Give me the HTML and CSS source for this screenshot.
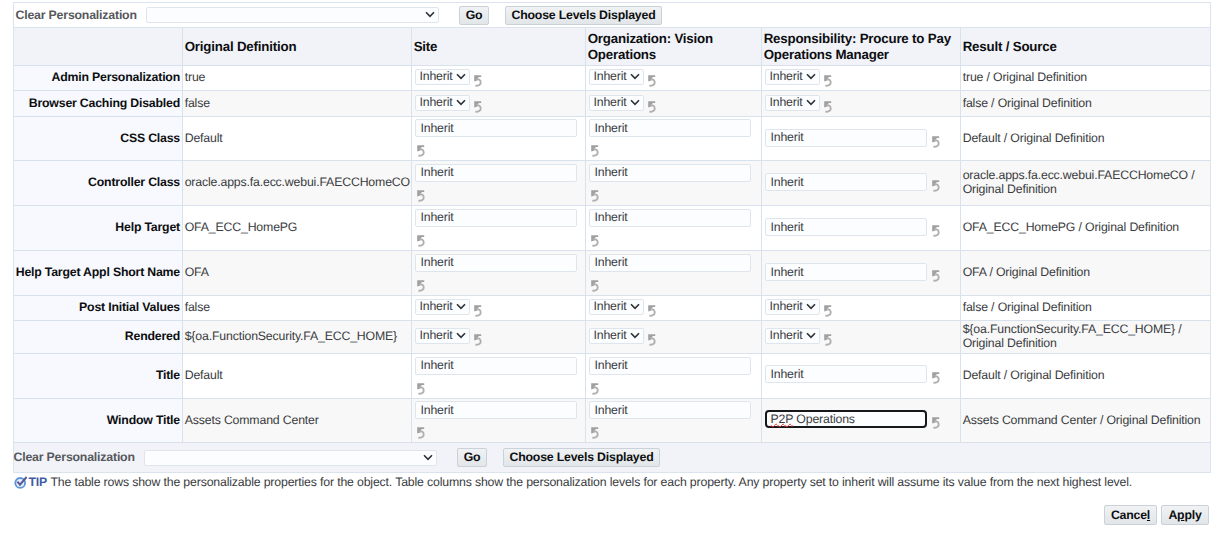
FILE: index.html
```html
<!DOCTYPE html>
<html lang="en">
<head>
<meta charset="utf-8">
<title>Personalize Page</title>
<link rel="stylesheet" href="styles.css">
</head>
<body>
<svg class="defs" width="0" height="0" aria-hidden="true">
  <symbol id="chev" viewBox="0 0 10 7"><path d="M1 1.2 5 5.4 9 1.2" fill="none" stroke="#2e3338" stroke-width="1.6"/></symbol>
  <symbol id="undo" viewBox="0 0 8 12"><path d="M0.2 0.2H7.2V1.9H5L3.4 3.5V5.6L0.2 6.4Z" fill="#a0a0a0"/><path d="M2.4 4.4C4.8 3.8 6.7 5.2 6.7 7.4 6.7 9.5 4.8 10.9 1.4 10.8" fill="none" stroke="#b0b0b0" stroke-width="1.9"/></symbol>
</svg>
<main class="page">
  <section class="panel">
    <div class="toolbar">
      <span class="toolbar-label">Clear Personalization</span>
      <span class="select wide"><svg class="chev"><use href="#chev"/></svg></span>
      <button class="btn go">Go</button>
      <button class="btn levels">Choose Levels Displayed</button>
    </div>
    <table class="props">
      <colgroup><col class="c-name"><col class="c-orig"><col class="c-site"><col class="c-org"><col class="c-resp"><col class="c-result"></colgroup>
      <thead>
        <tr class="head"><th></th><th>Original Definition</th><th>Site</th><th>Organization: Vision Operations</th><th>Responsibility: Procure to Pay Operations Manager</th><th>Result / Source</th></tr>
      </thead>
      <tbody>
        <tr class="r25"><th>Admin Personalization</th><td>true</td>
          <td class="pick"><div class="line"><span class="select">Inherit<svg class="chev"><use href="#chev"/></svg></span><svg class="undo"><use href="#undo"/></svg></div></td>
          <td class="pick"><div class="line"><span class="select">Inherit<svg class="chev"><use href="#chev"/></svg></span><svg class="undo"><use href="#undo"/></svg></div></td>
          <td class="pick"><div class="line"><span class="select">Inherit<svg class="chev"><use href="#chev"/></svg></span><svg class="undo"><use href="#undo"/></svg></div></td>
          <td>true / Original Definition</td></tr>
        <tr class="r26 alt"><th>Browser Caching Disabled</th><td>false</td>
          <td class="pick"><div class="line"><span class="select">Inherit<svg class="chev"><use href="#chev"/></svg></span><svg class="undo"><use href="#undo"/></svg></div></td>
          <td class="pick"><div class="line"><span class="select">Inherit<svg class="chev"><use href="#chev"/></svg></span><svg class="undo"><use href="#undo"/></svg></div></td>
          <td class="pick"><div class="line"><span class="select">Inherit<svg class="chev"><use href="#chev"/></svg></span><svg class="undo"><use href="#undo"/></svg></div></td>
          <td>false / Original Definition</td></tr>
        <tr class="r44"><th>CSS Class</th><td>Default</td>
          <td class="edit"><div class="stack"><input class="field" value="Inherit"><svg class="undo"><use href="#undo"/></svg></div></td>
          <td class="edit"><div class="stack"><input class="field" value="Inherit"><svg class="undo"><use href="#undo"/></svg></div></td>
          <td class="edit mid"><div class="line"><input class="field" value="Inherit"><svg class="undo"><use href="#undo"/></svg></div></td>
          <td>Default / Original Definition</td></tr>
        <tr class="r45 alt"><th>Controller Class</th><td>oracle.apps.fa.ecc.webui.FAECCHomeCO</td>
          <td class="edit"><div class="stack"><input class="field" value="Inherit"><svg class="undo"><use href="#undo"/></svg></div></td>
          <td class="edit"><div class="stack"><input class="field" value="Inherit"><svg class="undo"><use href="#undo"/></svg></div></td>
          <td class="edit mid"><div class="line"><input class="field" value="Inherit"><svg class="undo"><use href="#undo"/></svg></div></td>
          <td>oracle.apps.fa.ecc.webui.FAECCHomeCO / Original Definition</td></tr>
        <tr class="r45"><th>Help Target</th><td>OFA_ECC_HomePG</td>
          <td class="edit"><div class="stack"><input class="field" value="Inherit"><svg class="undo"><use href="#undo"/></svg></div></td>
          <td class="edit"><div class="stack"><input class="field" value="Inherit"><svg class="undo"><use href="#undo"/></svg></div></td>
          <td class="edit mid"><div class="line"><input class="field" value="Inherit"><svg class="undo"><use href="#undo"/></svg></div></td>
          <td>OFA_ECC_HomePG / Original Definition</td></tr>
        <tr class="r45 alt"><th>Help Target Appl Short Name</th><td>OFA</td>
          <td class="edit"><div class="stack"><input class="field" value="Inherit"><svg class="undo"><use href="#undo"/></svg></div></td>
          <td class="edit"><div class="stack"><input class="field" value="Inherit"><svg class="undo"><use href="#undo"/></svg></div></td>
          <td class="edit mid"><div class="line"><input class="field" value="Inherit"><svg class="undo"><use href="#undo"/></svg></div></td>
          <td>OFA / Original Definition</td></tr>
        <tr class="r25"><th>Post Initial Values</th><td>false</td>
          <td class="pick"><div class="line"><span class="select">Inherit<svg class="chev"><use href="#chev"/></svg></span><svg class="undo"><use href="#undo"/></svg></div></td>
          <td class="pick"><div class="line"><span class="select">Inherit<svg class="chev"><use href="#chev"/></svg></span><svg class="undo"><use href="#undo"/></svg></div></td>
          <td class="pick"><div class="line"><span class="select">Inherit<svg class="chev"><use href="#chev"/></svg></span><svg class="undo"><use href="#undo"/></svg></div></td>
          <td>false / Original Definition</td></tr>
        <tr class="r33 alt"><th>Rendered</th><td>${oa.FunctionSecurity.FA_ECC_HOME}</td>
          <td class="pick"><div class="line"><span class="select">Inherit<svg class="chev"><use href="#chev"/></svg></span><svg class="undo"><use href="#undo"/></svg></div></td>
          <td class="pick"><div class="line"><span class="select">Inherit<svg class="chev"><use href="#chev"/></svg></span><svg class="undo"><use href="#undo"/></svg></div></td>
          <td class="pick"><div class="line"><span class="select">Inherit<svg class="chev"><use href="#chev"/></svg></span><svg class="undo"><use href="#undo"/></svg></div></td>
          <td>${oa.FunctionSecurity.FA_ECC_HOME} / Original Definition</td></tr>
        <tr class="r45"><th>Title</th><td>Default</td>
          <td class="edit"><div class="stack"><input class="field" value="Inherit"><svg class="undo"><use href="#undo"/></svg></div></td>
          <td class="edit"><div class="stack"><input class="field" value="Inherit"><svg class="undo"><use href="#undo"/></svg></div></td>
          <td class="edit mid raised"><div class="line"><input class="field" value="Inherit"><svg class="undo"><use href="#undo"/></svg></div></td>
          <td>Default / Original Definition</td></tr>
        <tr class="r44 alt"><th>Window Title</th><td>Assets Command Center</td>
          <td class="edit"><div class="stack"><input class="field" value="Inherit"><svg class="undo"><use href="#undo"/></svg></div></td>
          <td class="edit"><div class="stack"><input class="field" value="Inherit"><svg class="undo"><use href="#undo"/></svg></div></td>
          <td class="edit mid raised"><div class="line"><div class="field focused"><span class="misspelled">P2P</span> Operations</div><svg class="undo"><use href="#undo"/></svg></div></td>
          <td>Assets Command Center / Original Definition</td></tr>
      </tbody>
    </table>
    <div class="toolbar bottom">
      <span class="toolbar-label">Clear Personalization</span>
      <span class="select wide"><svg class="chev"><use href="#chev"/></svg></span>
      <button class="btn go">Go</button>
      <button class="btn levels">Choose Levels Displayed</button>
    </div>
  </section>
  <div class="tip">
    <svg class="tip-icon" viewBox="0 0 14 13"><circle cx="6.2" cy="6.9" r="4.9" fill="#e6f0fb" stroke="#5b94d8" stroke-width="1.8"/><path d="M3.4 5.6 6 8.6 12.6 1" fill="none" stroke="#57579a" stroke-width="2"/></svg>
    <b class="tip-label">TIP</b><span>The table rows show the personalizable properties for the object. Table columns show the personalization levels for each property. Any property set to inherit will assume its value from the next highest level.</span>
  </div>
  <div class="actions"><button class="btn cancel"><span>Cance<u>l</u></span></button><button class="btn apply"><span>A<u>p</u>ply</span></button></div>
</main>
</body>
</html>
```
FILE: styles.css
```css
* { box-sizing: border-box; }
body {
  margin: 0;
  background: #fff;
  color: #393b3e;
  font: 12.3px/14px "Liberation Sans", Arial, sans-serif;
  letter-spacing: -0.16px;
  text-rendering: geometricPrecision;
  overflow: hidden;
}
.defs { display: block; }
.page { padding: 2px 15px 0 13px; }
.panel { border: 1px solid #dbe4ee; border-bottom: 0; }

.toolbar {
  display: flex;
  align-items: center;
  height: 25px;
  padding-left: 1.5px;
  border-bottom: 1px solid #dbe4ee;
}
.toolbar.bottom { height: 30px; padding-left: 0; background: #f2f3f8; }
.toolbar-label { flex: none; width: 130.5px; color: #55585c; font-weight: bold; letter-spacing: -0.18px; white-space: nowrap; }
.bottom .toolbar-label { width: 130px; padding-bottom: 1px; text-indent: -0.5px; }

.btn {
  height: 19px;
  padding: 0;
  border: 1px solid #c9d2da;
  border-radius: 2px;
  background: linear-gradient(#f0f2f3, #e2e6e9);
  color: #0d0e10;
  font: bold 12.3px/15px "Liberation Sans", Arial, sans-serif;
  letter-spacing: -0.19px;
  text-rendering: geometricPrecision;
  white-space: nowrap;
}
.go { width: 30px; margin-left: 20px; }
.levels { width: 157px; margin-left: 16px; }

.select {
  display: flex;
  align-items: center;
  flex: none;
  width: 55px;
  height: 16px;
  padding: 0 3px 1px 3.5px;
  border: 1px solid #dfe5ec;
  border-radius: 2px;
  background: #fcfdff;
  line-height: 13px;
}
.select.wide { width: 293px; }
.chev { width: 10px; height: 7px; margin-left: auto; }
.undo { display: block; flex: none; width: 8px; height: 12px; }

.props { width: 1196px; table-layout: fixed; border-collapse: separate; border-spacing: 0; }
.c-name { width: 169px; }
.c-orig { width: 229px; }
.c-site { width: 174px; }
.c-org { width: 176px; }
.c-resp { width: 199px; }
.c-result { width: 249px; }
.props th, .props td {
  padding: 0 0 2px 1.7px;
  border-right: 1px solid #d8e2ec;
  border-bottom: 1px solid #d8e2ec;
  text-align: left;
  vertical-align: middle;
}
.props th:last-child, .props td:last-child { border-right: 0; }
.props tbody th { padding: 0 2px 2px 0; background: #f7f9fe; color: #0d0e10; letter-spacing: -0.19px; text-align: right; white-space: nowrap; }
.props .head th { padding-bottom: 0; background: #f2f3f8; color: #0d0e10; font-size: 13.3px; letter-spacing: -0.19px; line-height: 16px; }
.alt { background: #f8f8f8; }
.head { height: 38px; }
.r25 { height: 25px; }
.r26 { height: 26px; }
.r33 { height: 33px; }
.r44 { height: 44px; }
.r45 { height: 45px; }

.props .pick, .props .edit { padding: 0 0 0 3px; }
.line { display: flex; align-items: flex-start; }
.pick .line { height: 18px; }
.pick .undo { margin: 6px 0 -1px 4px; }
.field {
  display: block;
  width: 162px;
  height: 18px;
  margin: 0;
  padding: 0 5px 1px 4.5px;
  border: 1px solid #dfe5ec;
  border-radius: 2px;
  background: #fcfdff;
  color: #393b3e;
  font: 12.3px/15px "Liberation Sans", Arial, sans-serif;
  letter-spacing: -0.16px;
  text-rendering: geometricPrecision;
}
.stack { height: 39px; }
.stack .undo { margin: 8px 0 0 2px; }
.mid .line { height: 20px; }
.mid .undo { margin: 7px 0 0 5px; }
.props .raised { padding-bottom: 2px; }
.field.focused { padding: 0 3.5px; border: 2px solid #17181a; border-radius: 4px; line-height: 14px; }
.misspelled { text-decoration: underline wavy #f03030 0.8px; text-underline-offset: 0; text-decoration-skip-ink: none; }

.tip { display: flex; align-items: center; height: 19px; padding: 0 0 1px 1px; white-space: nowrap; }
.tip-icon { width: 14px; height: 13px; }
.tip-label { width: 22px; margin-left: 0.5px; color: #3f5ba5; }
.actions { display: flex; justify-content: flex-end; gap: 4px; padding: 13px 2px 0 0; }
.actions .btn { height: 20px; }
.cancel { width: 53px; }
.apply { width: 48px; }
```
